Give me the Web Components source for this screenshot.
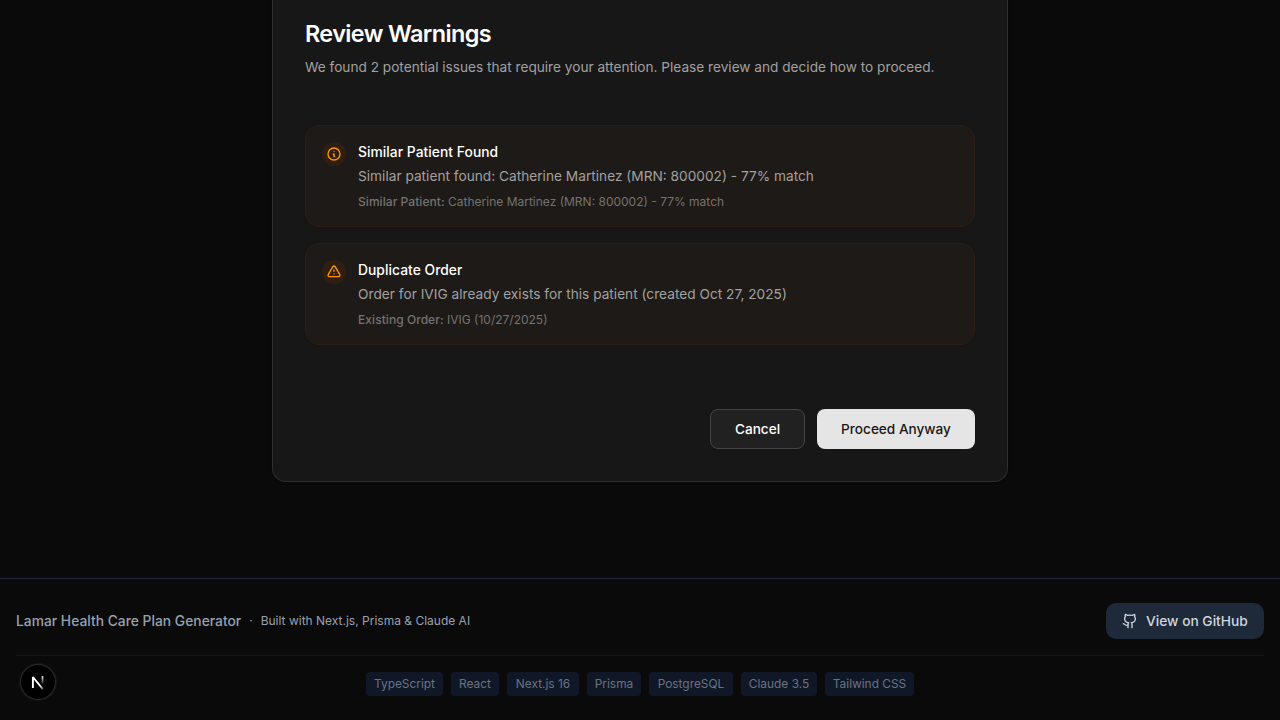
<!DOCTYPE html>
<html lang="en">
<head>
<meta charset="utf-8">
<title>Lamar Health Care Plan Generator</title>
<style>
  html, body { margin: 0; background: #0a0a0a; }
  body { font-family: Inter, "Liberation Sans", sans-serif; color: #fff; overflow: hidden; -webkit-font-smoothing: antialiased; }
</style>
</head>
<body>
<care-page>
  <review-card heading="Review Warnings" summary="We found 2 potential issues that require your attention. Please review and decide how to proceed.">
    <warning-item icon="info" heading="Similar Patient Found" label="Similar Patient:" detail="Catherine Martinez (MRN: 800002) - 77% match">Similar patient found: Catherine Martinez (MRN: 800002) - 77% match</warning-item>
    <warning-item icon="alert" heading="Duplicate Order" label="Existing Order:" detail="IVIG (10/27/2025)">Order for IVIG already exists for this patient (created Oct 27, 2025)</warning-item>
    <action-button slot="actions" style="width:95px">Cancel</action-button>
    <action-button slot="actions" style="width:158px" primary>Proceed Anyway</action-button>
  </review-card>
  <site-footer slot="footer">
    <tech-tag style="width:77px">TypeScript</tech-tag><tech-tag style="width:48px">React</tech-tag><tech-tag style="width:72px">Next.js 16</tech-tag><tech-tag style="width:54px">Prisma</tech-tag><tech-tag style="width:84px">PostgreSQL</tech-tag><tech-tag style="width:76px">Claude 3.5</tech-tag><tech-tag style="width:89px">Tailwind CSS</tech-tag>
  </site-footer>
  <dev-badge slot="overlay"></dev-badge>
</care-page>
<script>
class Base extends HTMLElement {
  constructor() {
    super();
    this.attachShadow({ mode: 'open' }).innerHTML = '<style>*{box-sizing:border-box}:host{box-sizing:border-box}svg{display:block;flex:none}</style>' + this.render();
  }
}
customElements.define('care-page', class extends Base {
  render() { return `<style>
    :host { display: flex; flex-direction: column; height: 720px; position: relative; background: #0a0a0a; }
    main { flex: 1; display: flex; justify-content: center; align-items: flex-start; }
    ::slotted([slot=overlay]) { position: absolute; left: 20px; bottom: 20px; }
  </style><main><slot></slot></main><slot name="footer"></slot><slot name="overlay"></slot>`; }
});
customElements.define('review-card', class extends Base {
  render() { return `<style>
    :host { display: block; width: 736px; height: 482px; padding: 18px 32px 32px; background: #171717; border: 1px solid #2e2e2e; border-top: 0; border-radius: 0 0 14px 14px; box-shadow: 0 1px 3px rgba(0,0,0,.1); }
    h1 { margin: 0; font-size: 23.4px; line-height: 32px; font-weight: 600; letter-spacing: -0.6px; color: #fff; }
    p { margin: 7px 0 0; font-size: 13.65px; line-height: 20px; color: #a1a1a1; }
    .list { display: flex; flex-direction: column; gap: 16px; margin-top: 48px; }
    .actions { display: flex; justify-content: flex-end; gap: 12px; margin-top: 64px; }
  </style><h1>${this.getAttribute('heading')}</h1><p>${this.getAttribute('summary')}</p>
  <div class="list"><slot></slot></div><div class="actions"><slot name="actions"></slot></div>`; }
});
const ICONS = {
  info: 'M13 16h-1v-4h-1m1-4h.01M21 12a9 9 0 11-18 0 9 9 0 0118 0z',
  alert: 'M12 9v2m0 4h.01m-6.938 4h13.856c1.54 0 2.502-1.667 1.732-3L13.732 4c-.77-1.333-2.694-1.333-3.464 0L3.34 16c-.77 1.333.192 3 1.732 3z'
};
customElements.define('warning-item', class extends Base {
  render() { return `<style>
    :host { display: flex; gap: 12px; padding: 16px; border: 1px solid #2f1c12; border-radius: 14px; background: #1e1a17; box-shadow: 0 1px 2px rgba(0,0,0,.08); }
    .icon { width: 24px; height: 24px; flex: none; border-radius: 50%; display: grid; place-items: center; background: #301e12; color: #fe9a00; }
    h2 { margin: 0; font-size: 13.8px; line-height: 20px; font-weight: 500; letter-spacing: 0.05px; color: #fff; }
    .text { margin-top: 4px; font-size: 13.7px; line-height: 20px; color: #a1a1a1; }
    .detail { margin-top: 8px; font-size: 12px; line-height: 16px; color: #747371; }
    b { font-weight: 500; letter-spacing: 0.06px; }
  </style><div class="icon"><svg width="16" height="16" viewBox="0 0 24 24" fill="none" stroke="currentColor" stroke-width="2" stroke-linecap="round" stroke-linejoin="round"><path d="${ICONS[this.getAttribute('icon')]}"/></svg></div>
  <div><h2>${this.getAttribute('heading')}</h2><div class="text"><slot></slot></div>
  <div class="detail"><b>${this.getAttribute('label')}</b> ${this.getAttribute('detail')}</div></div>`; }
});
customElements.define('action-button', class extends Base {
  render() { return `<style>
    :host { display: block; }
    button { display: block; width: 100%; font: 500 13.6px/20px Inter, sans-serif; white-space: nowrap; height: 40px; padding: 0; border: 1px solid #454545; border-radius: 8px; background: #212121; color: #fff; box-shadow: 0 1px 2px rgba(0,0,0,.05); }
    :host([primary]) button { background: #e5e5e5; color: #171717; border: 0; }
  </style><button><slot></slot></button>`; }
});
customElements.define('tech-tag', class extends Base {
  render() { return `<style>:host { display: block; padding: 4px 0; text-align: center; white-space: nowrap; border-radius: 4px; background: #101828; color: #6a7282; font-size: 11.9px; line-height: 16px; }</style><slot></slot>`; }
});
customElements.define('site-footer', class extends Base {
  render() { return `<style>
    :host { display: block; border-top: 1px solid #1e2939; padding: 24px 16px; }
    .row { display: flex; align-items: center; justify-content: space-between; height: 36px; }
    .info { display: flex; align-items: center; gap: 8px; color: #99a1af; font-size: 12px; line-height: 16px; }
    .name { font-size: 13.8px; line-height: 20px; font-weight: 500; letter-spacing: 0.02px; }
    a { display: flex; align-items: center; gap: 8px; width: 158px; white-space: nowrap; padding: 8px 16px; border-radius: 10px; background: #1e2939; color: #d1d5dc; font-size: 13.75px; line-height: 20px; font-weight: 500; }
    .tags { display: flex; justify-content: center; gap: 8px; margin-top: 16px; padding-top: 16px; border-top: 1px solid #101828; }
  </style>
  <div class="row"><div class="info"><span class="name">Lamar Health Care Plan Generator</span><span>·</span><span>Built with Next.js, Prisma &amp; Claude AI</span></div>
  <a><svg width="16" height="16" viewBox="0 0 24 24" fill="none" stroke="currentColor" stroke-width="2" stroke-linecap="round" stroke-linejoin="round"><path d="M15 22v-4a4.8 4.8 0 0 0-1-3.5c3 0 6-2 6-5.5.08-1.25-.27-2.48-1-3.5.28-1.15.28-2.35 0-3.5 0 0-1 0-3 1.5-2.64-.5-5.36-.5-8 0C6 2 5 2 5 2c-.3 1.15-.3 2.35 0 3.5A5.403 5.403 0 0 0 4 9c0 3.5 3 5.5 6 5.5-.39.49-.68 1.05-.85 1.65-.17.6-.22 1.23-.15 1.85v4"/><path d="M9 18c-4.51 2-5-2-7-2"/></svg><span>View on GitHub</span></a></div>
  <div class="tags"><slot></slot></div>`; }
});
customElements.define('dev-badge', class extends Base {
  render() { return `<style>
    :host { display: grid; place-items: center; width: 36px; height: 36px; border-radius: 50%; background: #000; box-shadow: 0 0 0 1px #171717, inset 0 0 0 1px #2b2b2b; }
  </style><svg width="36" height="36" viewBox="0 0 36 36" fill="none"><defs>
    <linearGradient id="a" gradientUnits="userSpaceOnUse" x1="18" y1="18" x2="24" y2="25"><stop offset=".4" stop-color="#fff"/><stop offset="1" stop-color="#fff" stop-opacity=".3"/></linearGradient>
    <linearGradient id="b" gradientUnits="userSpaceOnUse" x1="0" y1="12" x2="0" y2="21"><stop stop-color="#fff"/><stop offset="1" stop-color="#fff" stop-opacity="0"/></linearGradient></defs>
    <path d="M12.9 24V13L22.8 25.2" stroke="url(#a)" stroke-width="1.9" stroke-linejoin="bevel"/>
    <path d="M22.5 12.2V21" stroke="url(#b)" stroke-width="1.7"/></svg>`; }
});
</script>
</body>
</html>
